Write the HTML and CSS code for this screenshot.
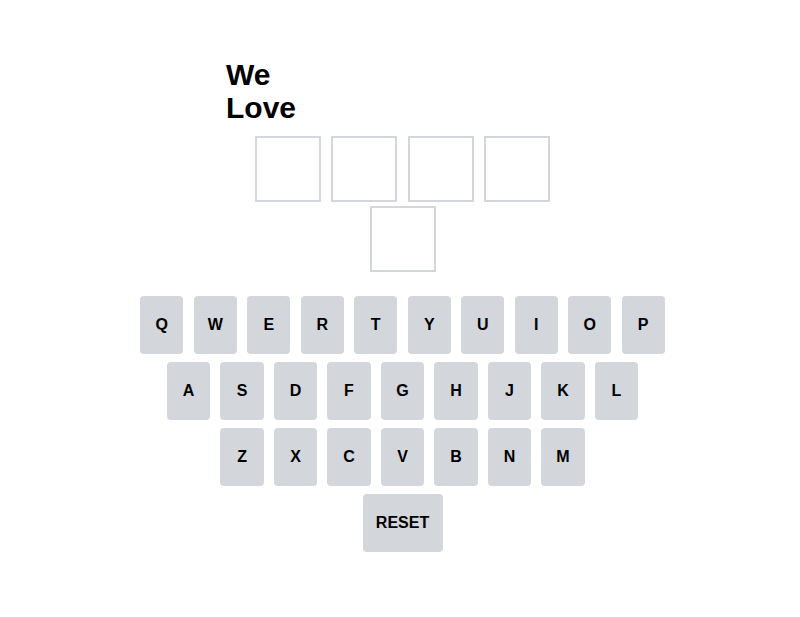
FILE: index.html
```html
<!DOCTYPE html>
<html>
<head>
<meta charset="utf-8">
<link rel="stylesheet" href="styles.css">
</head>
<body>
<div class="page">
  <h1 class="title">We Love</h1>
  <div class="board">
    <div class="tile"></div>
    <div class="tile"></div>
    <div class="tile"></div>
    <div class="tile"></div>
    <div class="tile"></div>
  </div>
  <div class="keyboard">
    <div class="row">
      <button class="key">Q</button><button class="key">W</button><button class="key">E</button><button class="key">R</button><button class="key">T</button><button class="key">Y</button><button class="key">U</button><button class="key">I</button><button class="key">O</button><button class="key">P</button>
    </div>
    <div class="row">
      <button class="key">A</button><button class="key">S</button><button class="key">D</button><button class="key">F</button><button class="key">G</button><button class="key">H</button><button class="key">J</button><button class="key">K</button><button class="key">L</button>
    </div>
    <div class="row">
      <button class="key">Z</button><button class="key">X</button><button class="key">C</button><button class="key">V</button><button class="key">B</button><button class="key">N</button><button class="key">M</button>
    </div>
    <div class="row">
      <button class="key key-wide">RESET</button>
    </div>
  </div>
</div>
</body>
</html>
```
FILE: styles.css
```css
html, body {
  margin: 0;
  padding: 0;
  background: #ffffff;
}
body {
  font-family: "Liberation Sans", Arial, sans-serif;
  color: #000;
}
.page {
  height: 618px;
  box-sizing: border-box;
  border-bottom: 1px solid #d3d6da;
  padding-top: 58px;
  overflow: hidden;
}
.title {
  margin: 0 0 0 226px;
  width: 80px;
  font-size: 30px;
  line-height: 33px;
  font-weight: 700;
}
.board {
  margin: 12px auto 0;
  padding-left: 5px;
  width: 297px;
  display: flex;
  flex-wrap: wrap;
  justify-content: center;
  column-gap: 10.3px;
  row-gap: 4px;
}
.tile {
  width: 66px;
  height: 66px;
  box-sizing: border-box;
  border: 2px solid #d3d6da;
}
.keyboard {
  margin-top: 24px;
  padding-left: 5px;
  display: flex;
  flex-direction: column;
  align-items: center;
  gap: 8px;
}
.row {
  display: flex;
  justify-content: center;
  gap: 10.2px;
}
.key {
  width: 43.3px;
  height: 58px;
  padding: 0;
  border: 0;
  border-radius: 4px;
  background: #d3d6da;
  color: #000;
  font-family: "Liberation Sans", Arial, sans-serif;
  font-size: 16px;
  font-weight: 700;
}
.key-wide {
  width: 80px;
}
```
